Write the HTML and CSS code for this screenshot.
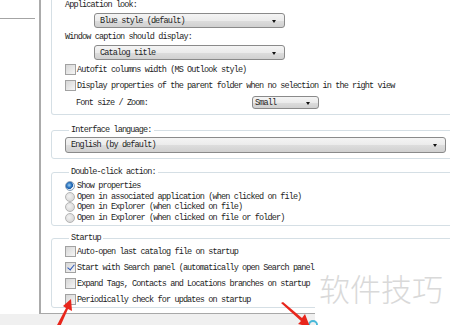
FILE: index.html
```html
<!DOCTYPE html>
<html>
<head>
	<meta charset="utf-8">
	<title>Options</title>
	<link rel="stylesheet" href="styles.css">
</head>
<body>
	<div class="window">
		<div class="main">
			<div class="nav">
				<div class="nav-rule"></div>
			</div>

			<div class="page">
				<!-- 外观 -->
				<div class="group group-top">
					<div class="label">Application look:</div>
					<div class="combo combo-look"><span>Blue style (default)</span><i class="arrow"></i></div>
					<div class="label label-gap">Window caption should display:</div>
					<div class="combo combo-caption"><span>Catalog title</span><i class="arrow"></i></div>
					<div class="check-row row-autofit"><span class="check"></span>Autofit columns width (MS Outlook style)</div>
					<div class="check-row row-parent"><span class="check"></span>Display properties of the parent folder when no selection in the right view</div>
					<div class="zoom-row">
						<span class="zoom-label">Font size / Zoom:</span>
						<div class="combo combo-small"><span>Small</span><i class="arrow"></i></div>
					</div>
				</div>

				<!-- 语言 -->
				<fieldset class="group group-lang">
					<legend>Interface language:</legend>
					<div class="combo combo-lang"><span>English (by default)</span><i class="arrow"></i></div>
				</fieldset>

				<!-- 双击 -->
				<fieldset class="group group-click">
					<legend>Double-click action:</legend>
					<div class="radio-row"><span class="radio on"></span>Show properties</div>
					<div class="radio-row"><span class="radio"></span>Open in associated application (when clicked on file)</div>
					<div class="radio-row"><span class="radio"></span>Open in Explorer (when clicked on file)</div>
					<div class="radio-row"><span class="radio"></span>Open in Explorer (when clicked on file or folder)</div>
				</fieldset>

				<!-- 启动 -->
				<fieldset class="group group-startup">
					<legend>Startup</legend>
					<div class="check-row"><span class="check"></span>Auto-open last catalog file on startup</div>
					<div class="check-row"><span class="check on"></span>Start with Search panel (automatically open Search panel)</div>
					<div class="check-row"><span class="check"></span>Expand Tags, Contacts and Locations branches on startup</div>
					<div class="check-row"><span class="check"></span>Periodically check for updates on startup</div>
				</fieldset>
			</div>
		</div>
		<div class="statusbar"></div>

		<!-- 水印 -->
		<div class="watermark"><span>软件技巧</span><i class="blip"></i></div>

		<!-- 红色箭头 -->
		<svg class="arrows" width="450" height="325" viewBox="0 0 450 325">
			<polygon points="56,327 60,327 68,309 72,311 71,299 63,306 66,308" fill="#e8261c"/>
			<polygon points="281,303 283,302 302,318 305,314 310,327 298,324 301,321" fill="#e8261c"/>
		</svg>
	</div>
</body>
</html>
```

FILE: styles.css
```css
* {
	margin: 0;
	padding: 0;
	box-sizing: border-box;
}

body {
	width: 450px;
	height: 325px;
	overflow: hidden;
	background-color: #fff;
	font-family: "Liberation Mono", "Noto Sans CJK SC", monospace;
	font-size: 8.5px;
	letter-spacing: -0.87px;
	color: #1e1e1e;
}

.window {
	position: relative;
	width: 450px;
	height: 325px;
	background-color: #f0f0f0;
}

.main {
	display: flex;
	height: 314px;
	background-color: #fff;
}

.nav {
	width: 40px;
	padding-top: 18px;
}

.nav-rule {
	width: 35px;
	height: 1px;
	background-color: #a4a4a4;
}

.page {
	width: 420px;
	border-left: 2px solid #ababab;
	border-bottom: 1px solid #a8a8a8;
	padding-left: 10px;
	overflow: hidden;
}

.group {
	width: 420px;
	border: 1px solid #d5dfe5;
	border-radius: 3px;
	padding-left: 13px;
}

.group legend {
	margin-left: 4px;
	padding: 0 2px;
	line-height: 10px;
}

.group-top {
	border-top: none;
	border-radius: 0 0 3px 3px;
	padding-bottom: 5px;
}

.label {
	line-height: 10px;
	white-space: nowrap;
}

.label-gap {
	margin-top: 4px;
}

/* 下拉框 */
.combo {
	position: relative;
	display: flex;
	align-items: center;
	height: 15px;
	border: 1px solid #8a8a8a;
	border-radius: 3px;
	background: linear-gradient(#f4f4f4 0%, #ebebeb 50%, #dddddd 51%, #d0d0d0 100%);
	padding-left: 5px;
	white-space: nowrap;
}

.combo .arrow {
	position: absolute;
	right: 8px;
	top: 50%;
	margin-top: -1px;
	border-left: 2.5px solid transparent;
	border-right: 2.5px solid transparent;
	border-top: 3px solid #111;
}

.combo-look {
	width: 191px;
	margin-left: 29px;
	margin-top: 3px;
}

.combo-caption {
	width: 191px;
	margin-left: 29px;
	margin-top: 3px;
}

.combo-small {
	width: 67px;
	height: 13px;
	padding-left: 2px;
}

.combo-lang {
	width: 381px;
	height: 16px;
	margin-top: 2px;
}

/* 复选框 */
.check-row {
	display: flex;
	align-items: center;
	height: 11px;
	white-space: nowrap;
}

.check {
	width: 11px;
	height: 11px;
	margin-right: 1px;
	flex-shrink: 0;
	border: 1px solid #a2a2a2;
	background: linear-gradient(135deg, #d6d6d6, #f6f6f6);
	position: relative;
}

.check.on::after {
	content: "";
	position: absolute;
	left: 3px;
	top: 0px;
	width: 3px;
	height: 6px;
	border-right: 1.5px solid #2a55b8;
	border-bottom: 1.5px solid #2a55b8;
	transform: rotate(40deg);
}

.row-autofit {
	margin-top: 4px;
}

.row-parent {
	margin-top: 5px;
}

.zoom-row {
	display: flex;
	align-items: center;
	margin-top: 5px;
	padding-left: 11px;
}

.zoom-label {
	width: 176px;
	flex-shrink: 0;
	white-space: nowrap;
}

.group-lang {
	margin-top: 10px;
	padding-bottom: 5px;
}

.group-click {
	margin-top: 8px;
	padding-top: 4px;
	padding-bottom: 2px;
}

/* 单选框 */
.radio-row {
	display: flex;
	align-items: center;
	height: 10.5px;
	white-space: nowrap;
}

.radio {
	width: 10px;
	height: 10px;
	margin-right: 2px;
	border-radius: 50%;
	border: 1px solid #b4b4b4;
	background: radial-gradient(circle at 40% 40%, #f2f2f2, #cfcfcf);
	position: relative;
}

.radio.on {
	border-color: #8aa0b8;
	background: radial-gradient(circle at 40% 40%, #9ed0f2 0, #2a73c0 2.5px, #1f5fa8 3.5px, #e8eef4 4px);
}

.group-startup {
	margin-top: 7px;
	padding-top: 3px;
	padding-bottom: 2px;
	display: flex;
	flex-direction: column;
	gap: 5px;
}

.statusbar {
	width: 315px;
	height: 11px;
	background-color: #f0f0f0;
}

/* 水印遮挡 */
.watermark {
	position: absolute;
	left: 315px;
	top: 243px;
	width: 135px;
	height: 82px;
	background-color: #fff;
}

.watermark span {
	position: absolute;
	left: 4px;
	top: 27px;
	font-family: "Noto Sans CJK SC", sans-serif;
	font-size: 31px;
	font-weight: 300;
	letter-spacing: 0;
	line-height: 36px;
	color: #d9d9d9;
	white-space: nowrap;
}

.watermark .blip {
	position: absolute;
	left: -7px;
	top: 77px;
	width: 10px;
	height: 10px;
	border-radius: 50%;
	border: 2px solid #49b8d8;
}

.arrows {
	position: absolute;
	left: 0;
	top: 0;
	pointer-events: none;
}
```
